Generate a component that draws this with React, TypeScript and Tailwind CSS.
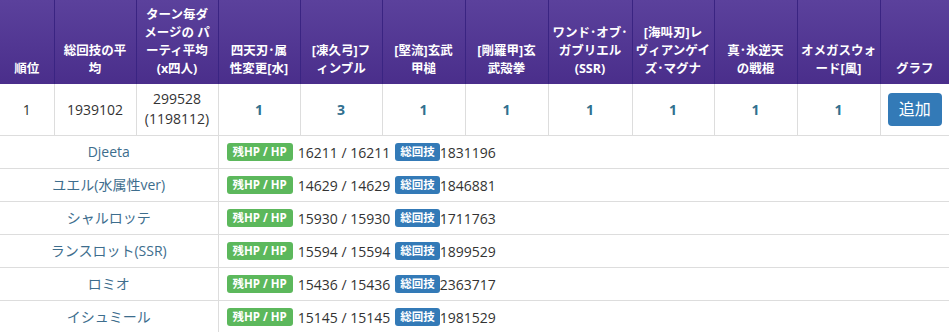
const headers: string[][] = [
  ['順位'],
  ['総回技の平', '均'],
  ['ターン毎ダ', 'メージの パ', 'ーティ平均', '(x四人)'],
  ['四天刃･属', '性変更[水]'],
  ['[凍久弓]フ', 'ィンブル'],
  ['[堅流]玄武', '甲槌'],
  ['[剛羅甲]玄', '武殻拳'],
  ['ワンド･オブ･', 'ガブリエル', '(SSR)'],
  ['[海叫刃]レ', 'ヴィアンゲイ', 'ズ･マグナ'],
  ['真･氷逆天', 'の戦棍'],
  ['オメガスウォ', 'ード[風]'],
  ['グラフ'],
];

const widths = [54, 82, 82, 82, 82, 83, 83, 84, 82, 83, 83, 69];

const counts = [1, 3, 1, 1, 1, 1, 1, 1];

const members = [
  { name: 'Djeeta', hp: '16211 / 16211', total: '1831196' },
  { name: 'ユエル(水属性ver)', hp: '14629 / 14629', total: '1846881' },
  { name: 'シャルロッテ', hp: '15930 / 15930', total: '1711763' },
  { name: 'ランスロット(SSR)', hp: '15594 / 15594', total: '1899529' },
  { name: 'ロミオ', hp: '15436 / 15436', total: '2363717' },
  { name: 'イシュミール', hp: '15145 / 15145', total: '1981529' },
];

export default function App() {
  return (
    <div
      className="w-[949px] h-[332px] overflow-hidden bg-white text-[14px] text-[#333]"
      style={{ fontFamily: '"Open Sans", "Noto Sans CJK JP", sans-serif' }}
    >
      <table className="w-[949px] table-fixed border-collapse">
        <colgroup>
          {widths.map((w, i) => (
            <col key={i} style={{ width: w }} />
          ))}
        </colgroup>
        <thead>
          <tr className="h-[84px] bg-gradient-to-b from-[#5b419c] to-[#4a2e8b]">
            {headers.map((lines, i) => (
              <th
                key={i}
                className="border-x border-[#3a2482] first:border-l-0 last:border-r-0 px-0 pb-[6px] align-bottom text-center text-[12.5px] font-bold leading-[18px] text-white"
              >
                {lines.map((l, j) => (
                  <div key={j} className="whitespace-nowrap">
                    {l}
                  </div>
                ))}
              </th>
            ))}
          </tr>
        </thead>
        <tbody>
          <tr className="h-[51px] border-b border-[#ddd]">
            <td className="border-r border-[#ddd] text-center">1</td>
            <td className="border-r border-[#ddd] text-center">1939102</td>
            <td className="border-r border-[#ddd] text-center leading-[20px]">
              299528
              <br />
              (1198112)
            </td>
            {counts.map((c, i) => (
              <td key={i} className="border-r border-[#ddd] text-center font-bold text-[#31708f]">
                {c}
              </td>
            ))}
            <td className="text-center">
              <button className="rounded-[4px] bg-[#337ab7] px-[11px] py-[6px] text-[16px] leading-[21px] text-white">
                追加
              </button>
            </td>
          </tr>
          {members.map((m) => (
            <tr key={m.name} className="h-[33px] border-b border-[#ddd]">
              <td colSpan={3} className="border-r border-[#ddd] text-center text-[#3d6d8d]">
                {m.name}
              </td>
              <td colSpan={9} className="pl-[8px] whitespace-nowrap">
                <span className="inline-block rounded-[3px] bg-[#5cb85c] px-[6px] text-[11.5px] font-bold leading-[18px] text-white align-middle">
                  残HP / HP
                </span>
                <span className="ml-[5px] align-middle">{m.hp}</span>
                <span className="ml-[5px] inline-block rounded-[3px] bg-[#337ab7] px-[5px] text-[11.5px] font-bold leading-[18px] text-white align-middle">
                  総回技
                </span>
                <span className="align-middle">{m.total}</span>
              </td>
            </tr>
          ))}
        </tbody>
      </table>
    </div>
  );
}
